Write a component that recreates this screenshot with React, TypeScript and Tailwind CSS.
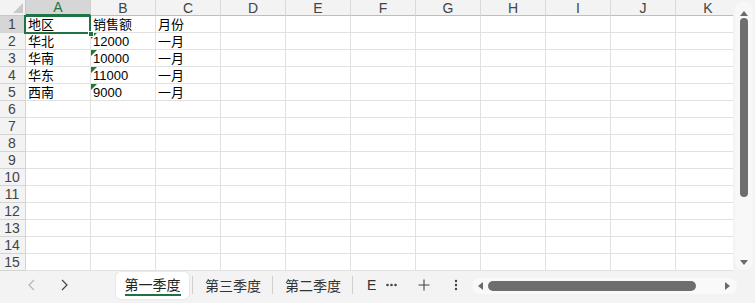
import React from "react";

const COLS = ["A", "B", "C", "D", "E", "F", "G", "H", "I", "J", "K"];
const DATA: Record<number, string[]> = {
  1: ["地区", "销售额", "月份"],
  2: ["华北", "12000", "一月"],
  3: ["华南", "10000", "一月"],
  4: ["华东", "11000", "一月"],
  5: ["西南", "9000", "一月"],
};

const cellFont = { fontFamily: '"Liberation Sans", "Noto Sans CJK SC", Arial, sans-serif' };

function Tri({ dir, className }: { dir: "up" | "down" | "left" | "right"; className?: string }) {
  const pts =
    dir === "up"
      ? "0,6 4,1 8,6"
      : dir === "down"
      ? "0,1 8,1 4,6"
      : dir === "left"
      ? "6,0 6,8 1,4"
      : "1,0 1,8 6,4";
  return (
    <svg width="8" height="8" viewBox="0 0 8 8" className={className}>
      <polygon points={pts} fill="#6b6b6b" />
    </svg>
  );
}

export default function App() {
  const rows = Array.from({ length: 15 }, (_, i) => i + 1);
  return (
    <div className="w-[755px] h-[303px] flex flex-col bg-[#f3f3f3] overflow-hidden" style={cellFont}>
      <div className="flex h-[271px]">
        <div className="w-[733px] h-[271px] overflow-hidden bg-white relative">
          <div className="grid grid-cols-[26px_repeat(11,65px)] grid-rows-[16px_repeat(15,17px)] w-[741px]">
            {/* corner */}
            <div className="bg-[#f3f3f3] border-r border-b border-[#c8c8c8] relative">
              <svg width="10" height="10" viewBox="0 0 10 10" className="absolute right-[2px] bottom-[2px]">
                <polygon points="10,0 10,10 0,10" fill="#c9c9c9" />
              </svg>
            </div>
            {COLS.map((c) => (
              <div
                key={c}
                className={
                  c === "A"
                    ? "bg-[#d6d6d6] border-r border-[#d0d0d0] border-b-2 border-b-[#217346] flex items-center justify-center text-[14px] text-[#217346] leading-none"
                    : "bg-[#f3f3f3] border-r border-[#dadada] border-b border-b-[#bdbdbd] flex items-center justify-center text-[14px] text-[#444] leading-none"
                }
              >
                {c}
              </div>
            ))}
            {rows.map((r) => (
              <React.Fragment key={r}>
                <div
                  className={
                    (r === 1 ? "bg-[#d6d6d6] " : "bg-[#f3f3f3] ") +
                    "border-r border-b border-[#d4d4d4] flex items-center justify-center pr-[1px] text-[14px] text-[#444] leading-none"
                  }
                >
                  {r}
                </div>
                {COLS.map((c, ci) => {
                  const v = DATA[r]?.[ci];
                  const tri = c === "B" && r >= 2 && r <= 5;
                  return (
                    <div
                      key={c}
                      className="border-r border-b border-[#e1e1e1] relative flex items-center pl-[2px] text-[13px] text-black leading-none whitespace-nowrap"
                    >
                      {tri && (
                        <svg width="6" height="6" viewBox="0 0 6 6" className="absolute left-0 top-0">
                          <polygon points="0,0 6,0 0,6" fill="#1e7b34" />
                        </svg>
                      )}
                      {v}
                    </div>
                  );
                })}
              </React.Fragment>
            ))}
          </div>
          {/* selection A1 */}
          <div className="absolute left-[24px] top-[15px] w-[67px] h-[19px] border-2 border-[#217346] pointer-events-none" />
          <div className="absolute left-[88px] top-[31px] w-[6px] h-[6px] bg-[#217346] border border-white" />
        </div>
        {/* vertical scrollbar */}
        <div className="w-[22px] h-[271px] flex justify-center pt-[1px]">
          <div className="w-[18px] h-[269px] rounded-full bg-[#f8f8f8] flex flex-col items-center">
            <Tri dir="up" className="mt-[9px]" />
            <div className="w-[8px] h-[179px] mt-[0px] rounded-full bg-[#6e6e6e]" />
            <div className="flex-1" />
            <Tri dir="down" className="mb-[3px]" />
          </div>
        </div>
      </div>
      {/* bottom bar */}
      <div className="h-[32px] flex items-start text-[14px] text-[#333]" style={{ fontFamily: '"Noto Sans CJK SC", "Liberation Sans", sans-serif' }}>
        <div className="w-[116px] h-[28px] flex items-center shrink-0">
          <svg width="8" height="12" viewBox="0 0 8 12" className="ml-[28px]">
            <polyline points="6,1 1,6 6,11" fill="none" stroke="#b5b5b5" strokeWidth="1.2" />
          </svg>
          <svg width="8" height="12" viewBox="0 0 8 12" className="ml-[24px]">
            <polyline points="2,1 7,6 2,11" fill="none" stroke="#444" strokeWidth="1.2" />
          </svg>
        </div>
        <div className="w-[73px] h-[27px] mt-[1px] shrink-0 bg-white rounded-[5px] shadow-[0_0_2px_rgba(0,0,0,0.15)] flex items-center justify-center">
          <div className="flex flex-col items-center">
            <span className="leading-[18px] text-[#222]">第一季度</span>
            <div className="w-[56px] h-[2px] bg-[#1e7145] mt-[1px]" />
          </div>
        </div>
        <div className="w-[283px] shrink-0 h-[28px] flex items-center">
          <div className="w-[1px] h-[18px] bg-[#cfcfcf] ml-[3px]" />
          <span className="ml-[12px] leading-none">第三季度</span>
          <div className="w-[1px] h-[18px] bg-[#cfcfcf] ml-[11px]" />
          <span className="ml-[12px] leading-none">第二季度</span>
          <div className="w-[1px] h-[18px] bg-[#cfcfcf] ml-[11px]" />
          <span className="ml-[14px] leading-none" style={{ fontFamily: '"Liberation Sans", sans-serif' }}>E</span>
          <svg width="11" height="4" viewBox="0 0 11 4" className="ml-[10px]">
            <circle cx="1.5" cy="2" r="1.3" fill="#444" />
            <circle cx="5.5" cy="2" r="1.3" fill="#444" />
            <circle cx="9.5" cy="2" r="1.3" fill="#444" />
          </svg>
          <svg width="12" height="12" viewBox="0 0 12 12" className="ml-[21px]">
            <path d="M6 0.5V11.5M0.5 6H11.5" stroke="#444" strokeWidth="1.1" />
          </svg>
          <svg width="4" height="12" viewBox="0 0 4 12" className="ml-[24px]">
            <circle cx="2" cy="2" r="1.2" fill="#444" />
            <circle cx="2" cy="6" r="1.2" fill="#444" />
            <circle cx="2" cy="10" r="1.2" fill="#444" />
          </svg>
        </div>
        <div className="mt-[7px] w-[265px] shrink-0 h-[16px] rounded-full bg-[#f9f9f9] flex items-center">
          <Tri dir="left" className="ml-[5px]" />
          <div className="ml-[3px] w-[208px] h-[10px] rounded-full bg-[#6e6e6e]" />
          <div className="flex-1" />
          <Tri dir="right" className="mr-[5px]" />
        </div>
      </div>
    </div>
  );
}
